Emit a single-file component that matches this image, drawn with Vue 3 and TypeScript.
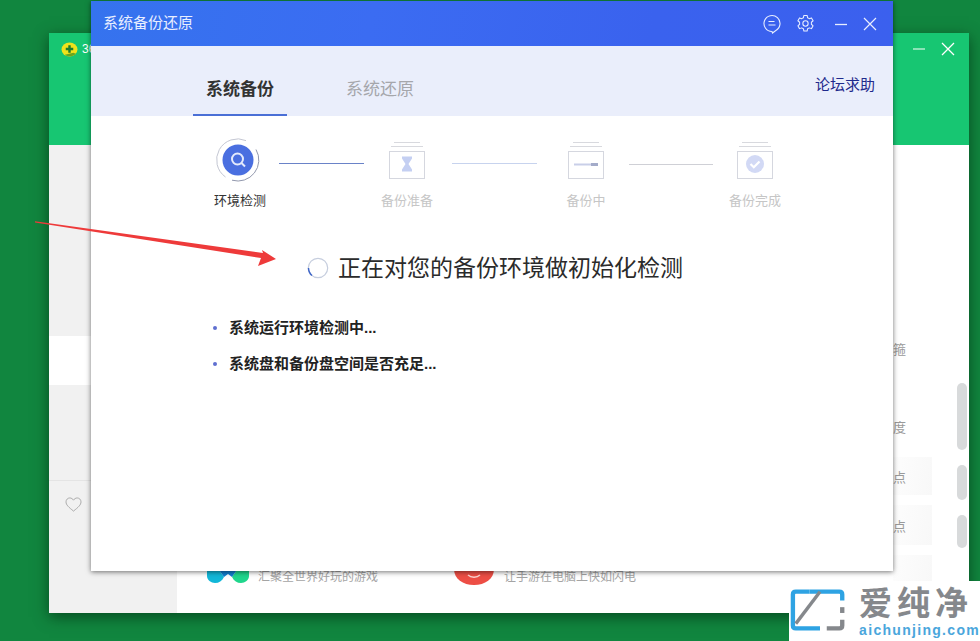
<template>
<div class="desktop">
    <!-- window behind -->
    <div class="back-window">
        <div class="back-head">
            <svg class="logo360" viewBox="0 0 18 16" width="17" height="15">
                <ellipse cx="9" cy="8" rx="8.500" ry="7.500" fill="#efe21c"/>
                <path d="M4 13.500c3 2.500 8 2.500 12-1l-3-1z" fill="#6aa51f"/>
                <path d="M9 3.500v8M5 7.500h8" stroke="#1d7d2c" stroke-width="2.600"/>
            </svg>
            <span class="back-title">360</span>
            <div class="back-ctrl">
                <svg viewBox="0 0 12 12" width="12" height="12"><path d="M0 2h5M0 6h5M0 10h5" stroke="#bff0d6" stroke-width="1"/></svg>
                <svg viewBox="0 0 14 14" width="14" height="14"><path d="M1 7h12" stroke="#d8f6e6" stroke-width="1.200"/></svg>
                <svg viewBox="0 0 14 14" width="14" height="14"><path d="M1 1l12 12M13 1L1 13" stroke="#fff" stroke-width="1.300"/></svg>
            </div>
        </div>
        <div class="back-body">
            <div class="back-side">
                <div class="side-top"></div>
                <div class="side-white"></div>
                <div class="side-mid"></div>
                <div class="side-fav">
                    <svg viewBox="0 0 18 16" width="17" height="15">
                        <path d="M9 15C4 11 1 8.500 1 5.200 1 2.800 2.900 1 5 1c1.700 0 3.200 1 4 2.400C9.800 2 11.300 1 13 1c2.100 0 4 1.800 4 4.200C17 8.500 14 11 9 15z" fill="none" stroke="#a8a8a8"/>
                    </svg>
                </div>
            </div>
            <div class="back-main">
                <div class="promo-row">
                    <svg class="promo-icon" viewBox="0 0 42 16" width="42" height="16">
                        <path d="M0 0h10l7 10c-2 4-5 6-9 6-4 0-8-3-8-7z" fill="#12b7d8"/>
                        <path d="M42 0H32l-7 10c2 4 5 6 9 6 4 0 8-3 8-7z" fill="#1fd68c"/>
                        <path d="M10 0h22l-7 10-4-3-4 3z" fill="#0f7fd0"/>
                    </svg>
                    <span class="promo-text">汇聚全世界好玩的游戏</span>
                    <svg class="promo-face" viewBox="0 0 40 16" width="40" height="16">
                        <path d="M0 0h40c0 10-9 16-20 16S0 10 0 0z" fill="#ed4e45"/>
                        <path d="M14 6c3 3 9 3 12 0" fill="none" stroke="#fbd5d0" stroke-width="1.500"/>
                    </svg>
                    <span class="promo-text">让手游在电脑上快如闪电</span>
                </div>
            </div>
            <i class="faint-panel" style="top: 312px; height: 38px"></i>
            <i class="faint-panel" style="top: 360px; height: 40px"></i>
            <i class="faint-panel" style="top: 410px; height: 26px"></i>
            <span class="edge-char" style="top: 198px">箍</span>
            <span class="edge-char" style="top: 276px">度</span>
            <span class="edge-char" style="top: 326px">点</span>
            <span class="edge-char" style="top: 375px">点</span>
            <i class="scroll-bit" style="top: 238px; height: 67px"></i>
            <i class="scroll-bit" style="top: 320px; height: 35px"></i>
            <i class="scroll-bit" style="top: 370px; height: 33px"></i>
        </div>
    </div>

    <!-- backup dialog -->
    <div class="dialog">
        <div class="title-bar">
            <span class="title">系统备份还原</span>
            <div class="title-icons">
                <svg viewBox="0 0 18 20" width="18" height="20" class="ic-chat">
                    <path d="M9 17.500a8 8 0 1 1 3.500-.8L9.500 19z" fill="none" stroke="#e8eeff" stroke-width="1.100"/>
                    <path d="M5.500 7.500h6M5.500 11h7" stroke="#e8eeff" stroke-width="1.100"/>
                </svg>
                <svg viewBox="0 0 20 20" width="19" height="19" class="ic-gear">
                    <path d="M8.300 1.500h3.400l.5 2.400 1.800 1 2.300-.8 1.700 3-1.800 1.600v2.100l1.800 1.600-1.700 3-2.300-.8-1.800 1-.5 2.400H8.300l-.5-2.400-1.800-1-2.300.8-1.700-3 1.800-1.600V8.700L2 7.100l1.700-3 2.300.8 1.800-1z" fill="none" stroke="#e8eeff" stroke-width="1.100" stroke-linejoin="round"/>
                    <circle cx="10" cy="10" r="2.800" fill="none" stroke="#e8eeff" stroke-width="1.100"/>
                </svg>
                <svg viewBox="0 0 14 14" width="14" height="14" class="ic-min"><path d="M1 7.500h12" stroke="#e8eeff" stroke-width="1.300"/></svg>
                <svg viewBox="0 0 14 14" width="14" height="14"><path d="M1 1l12 12M13 1L1 13" stroke="#e8eeff" stroke-width="1.200"/></svg>
            </div>
        </div>
        <div class="tab-band">
            <div class="tab active">系统备份</div>
            <div class="tab">系统还原</div>
            <a class="help">论坛求助</a>
        </div>
        <div class="content">
            <div class="steps">
                <template v-for="(step, i) in steps" :key="step.name">
                    <div class="step" :class="{ current: i === 0 }">
                        <div class="step-icon">
                            <svg v-if="i === 0" viewBox="0 0 44 44" width="44" height="44">
                                <path d="M30 2.600A21 21 0 0 0 9.500 39" fill="none" stroke="#c3c6d2" stroke-width="1"/>
                                <path d="M16 42.200A21 21 0 0 0 40 11.500" fill="none" stroke="#9298ad" stroke-width="1"/>
                                <circle cx="22" cy="22" r="15.500" fill="#4a6fe0"/>
                                <circle cx="21.500" cy="21" r="5.500" fill="none" stroke="#e4eafc" stroke-width="2"/>
                                <path d="M25.500 25l3.500 3.500" stroke="#e4eafc" stroke-width="2"/>
                            </svg>
                            <svg v-else class="box-icon" viewBox="0 0 38 38" width="38" height="38">
                                <path d="M6 1.500h26M3 5.500h32" stroke="#d8d9de" stroke-width="1"/>
                                <rect x="1.500" y="10.500" width="35" height="27" fill="#fff" stroke="#d5d7df"/>
                                <path v-if="step.glyph === 'hourglass'" d="M14 15.500h10v2l-3.500 5.500 3.500 5.500v2H14v-2l3.500-5.500-3.500-5.500z" fill="#c4cff2"/>
                                <g v-if="step.glyph === 'bar'">
                                    <path d="M7 23.500h24" stroke="#c9cfe8" stroke-width="2"/>
                                    <path d="M24 23.500h7" stroke="#a3abc9" stroke-width="3"/>
                                </g>
                                <g v-if="step.glyph === 'check'">
                                    <circle cx="19" cy="23" r="9" fill="#d2d9f5"/>
                                    <path d="M14.500 23l3.300 3.200 5.700-5.700" fill="none" stroke="#fff" stroke-width="2.200"/>
                                </g>
                            </svg>
                        </div>
                        <div class="step-name">{{ step.name }}</div>
                    </div>
                    <div v-if="i < steps.length - 1" class="step-line" :class="step.line"></div>
                </template>
            </div>
            <div class="status">
                <svg class="spinner" viewBox="0 0 22 22" width="22" height="22">
                    <circle cx="11" cy="11" r="9.700" fill="none" stroke="#c6cede" stroke-width="1.200"/>
                    <path d="M1.500 11A9.700 9.700 0 0 0 5 18.500" fill="none" stroke="#3f66c8" stroke-width="1.500"/>
                </svg>
                <span>正在对您的备份环境做初始化检测</span>
            </div>
            <ul class="checks">
                <li>系统运行环境检测中...</li>
                <li>系统盘和备份盘空间是否充足...</li>
            </ul>
        </div>
    </div>

    <!-- annotation arrow on top of everything -->
    <svg class="arrow" viewBox="0 0 245 50" width="245" height="50">
        <path d="M0 1.200 L228 33 L227 30 L241 39 L223 46 L226 38 L0 2.400 Z" fill="#ee3a3a"/>
    </svg>

    <div class="watermark">
        <svg viewBox="0 0 58 48" width="58" height="48">
            <path d="M20 3H6Q3 3 3 6v32q0 3 3 3h25" fill="none" stroke="#2ea3e3" stroke-width="4.500"/>
            <path d="M20 3h31q3 0 3 3v6" fill="none" stroke="#2ea3e3" stroke-width="4.500"/>
            <path d="M6 36L31 3" stroke="#85888c" stroke-width="3.500"/>
            <path d="M38 41h13q3 0 3-3v-6" fill="none" stroke="#85888c" stroke-width="4.500"/>
            <path d="M54 19v6" stroke="#85888c" stroke-width="4.500"/>
        </svg>
        <div class="wm-text">
            <div class="wm-cn">爱纯净</div>
            <div class="wm-url">aichunjing.com</div>
        </div>
    </div>
</div>
</template>
<script setup lang="ts">
interface Step {
    name: string
    glyph: string
    line?: string
}

const steps: Step[] = [
    { name: '环境检测', glyph: 'search', line: 'strong' },
    { name: '备份准备', glyph: 'hourglass', line: 'light' },
    { name: '备份中', glyph: 'bar', line: 'grey' },
    { name: '备份完成', glyph: 'check' },
];
</script>
<style>
html, body {
    margin: 0;
    background: #11863f;
}
</style>
<style scoped>
.desktop {
    position: relative;
    width: 980px;
    height: 641px;
    overflow: hidden;
    background: #11863f;
    font-family: "Liberation Sans", "Noto Sans CJK SC", sans-serif;
}
.back-window {
    position: absolute;
    left: 49px;
    top: 33px;
    width: 920px;
    height: 580px;
    display: flex;
    flex-direction: column;
    background: #fff;
    box-shadow: 0 4px 14px rgba(0, 50, 20, 0.7);
}
.back-head {
    height: 112px;
    flex: none;
    background: #17c672;
    display: flex;
    align-items: flex-start;
    padding: 9px 14px 0 12px;
    box-sizing: border-box;
    color: #fff;
    font-size: 12px;
}
.back-title {
    margin-left: 4px;
    line-height: 15px;
}
.back-ctrl {
    margin-left: auto;
    display: flex;
    align-items: center;
    gap: 15px;
}
.back-body {
    flex: 1;
    display: flex;
    position: relative;
}
.back-side {
    width: 128px;
    flex: none;
    background: #f1f1f1;
    display: flex;
    flex-direction: column;
}
.side-top {
    height: 191px;
}
.side-white {
    height: 49px;
    background: #fff;
}
.side-mid {
    height: 95px;
    border-bottom: 1px solid #e4e4e4;
}
.side-fav {
    padding: 16px 0 0 16px;
}
.back-main {
    flex: 1;
    display: flex;
    align-items: flex-end;
}
.promo-row {
    display: flex;
    align-items: center;
    padding: 0 0 30px 30px;
    height: 16px;
}
.promo-icon {
    margin-right: 9px;
}
.promo-text {
    font-size: 12px;
    color: #a4a4a4;
    white-space: nowrap;
}
.promo-face {
    margin: 4px 10px 0 76px;
}
.edge-char {
    position: absolute;
    left: 844px;
    font-size: 13px;
    color: #9a9a9a;
    line-height: 14px;
}
.faint-panel {
    position: absolute;
    left: 844px;
    width: 39px;
    background: linear-gradient(100deg, #fdfdfd, #f8f8f8);
}
.scroll-bit {
    position: absolute;
    left: 908px;
    width: 10px;
    border-radius: 5px;
    background: #d8dadb;
}
.dialog {
    position: absolute;
    left: 91px;
    top: 1px;
    width: 802px;
    height: 570px;
    display: flex;
    flex-direction: column;
    background: #fff;
    box-shadow: 0 1px 5px rgba(0, 0, 0, 0.55);
}
.title-bar {
    height: 45px;
    flex: none;
    display: flex;
    align-items: center;
    justify-content: space-between;
    padding: 0 16px 0 12px;
    background: linear-gradient(100deg, #3573ee 0%, #3b6cf2 35%, #3a62ee 70%, #3b60ee 100%);
    color: #e8eeff;
}
.title {
    font-size: 15px;
    line-height: 43px;
    padding-bottom: 2px;
}
.title-icons {
    display: flex;
    align-items: center;
    gap: 15px;
}
.ic-min {
    margin-left: 4px;
}
.tab-band {
    height: 70px;
    flex: none;
    display: flex;
    align-items: stretch;
    padding: 0 18px 0 102px;
    background: #eaeefb;
}
.tab {
    width: 94px;
    box-sizing: border-box;
    padding-top: 33px;
    margin-right: 46px;
    text-align: center;
    font-size: 17px;
    line-height: 22px;
    color: #a5a6ab;
}
.tab.active {
    font-weight: bold;
    color: #333;
    border-bottom: 2px solid #4a6fd6;
}
.help {
    margin-left: auto;
    padding-top: 29px;
    font-size: 15px;
    line-height: 20px;
    color: #1f2a8c;
}
.content {
    flex: 1;
    padding-top: 22px;
}
.steps {
    display: flex;
    align-items: flex-start;
    padding-left: 107px;
}
.step {
    width: 80px;
    flex: none;
    display: flex;
    flex-direction: column;
    align-items: center;
}
.step-icon {
    height: 44px;
    display: flex;
    align-items: flex-start;
}
.box-icon {
    margin-top: 3px;
}
.step-name {
    margin-top: 9px;
    font-size: 13px;
    line-height: 20px;
    white-space: nowrap;
    color: #c6c6c6;
}
.step.current .step-name {
    margin-left: 4px;
    color: #333;
}
.step-line {
    width: 85px;
    height: 1px;
    flex: none;
    margin-top: 25px;
}
.step-line.strong {
    background: #6a83c8;
    margin-left: 1px;
    margin-right: 3px;
}
.step-line.light {
    background: #c7d3ee;
    margin-left: 5px;
    margin-right: 9px;
}
.step-line.grey {
    width: 84px;
    background: #cfd0d6;
    margin-left: 3px;
    margin-right: 2px;
    margin-top: 26px;
}
.status {
    display: flex;
    align-items: center;
    margin-top: 41px;
    padding-left: 216px;
    font-size: 23px;
    line-height: 32px;
    color: #2b2b2b;
}
.spinner {
    margin-right: 9px;
}
.checks {
    list-style: none;
    margin: 34px 0 0;
    padding: 0 0 0 122px;
}
.checks li {
    position: relative;
    padding-left: 16px;
    margin-bottom: 16px;
    font-size: 15px;
    line-height: 20px;
    font-weight: bold;
    color: #222;
}
.checks li::before {
    content: '';
    position: absolute;
    left: 0;
    top: 8px;
    width: 4px;
    height: 4px;
    border-radius: 50%;
    background: #5f6fd0;
}
.arrow {
    position: absolute;
    left: 35px;
    top: 220px;
}
.watermark {
    position: absolute;
    left: 789px;
    top: 581px;
    width: 191px;
    height: 60px;
    background: #fff;
    display: flex;
    align-items: flex-start;
    padding: 7px 0 0 1px;
    box-sizing: border-box;
}
.wm-text {
    margin-left: 13px;
    display: flex;
    flex-direction: column;
}
.wm-cn {
    font-size: 33px;
    line-height: 32px;
    font-weight: bold;
    color: #85888c;
    letter-spacing: 5px;
    white-space: nowrap;
}
.wm-url {
    margin-top: 3px;
    font-size: 14px;
    line-height: 15px;
    font-weight: bold;
    color: #4aa6dc;
    letter-spacing: 1.300px;
    white-space: nowrap;
}
</style>
